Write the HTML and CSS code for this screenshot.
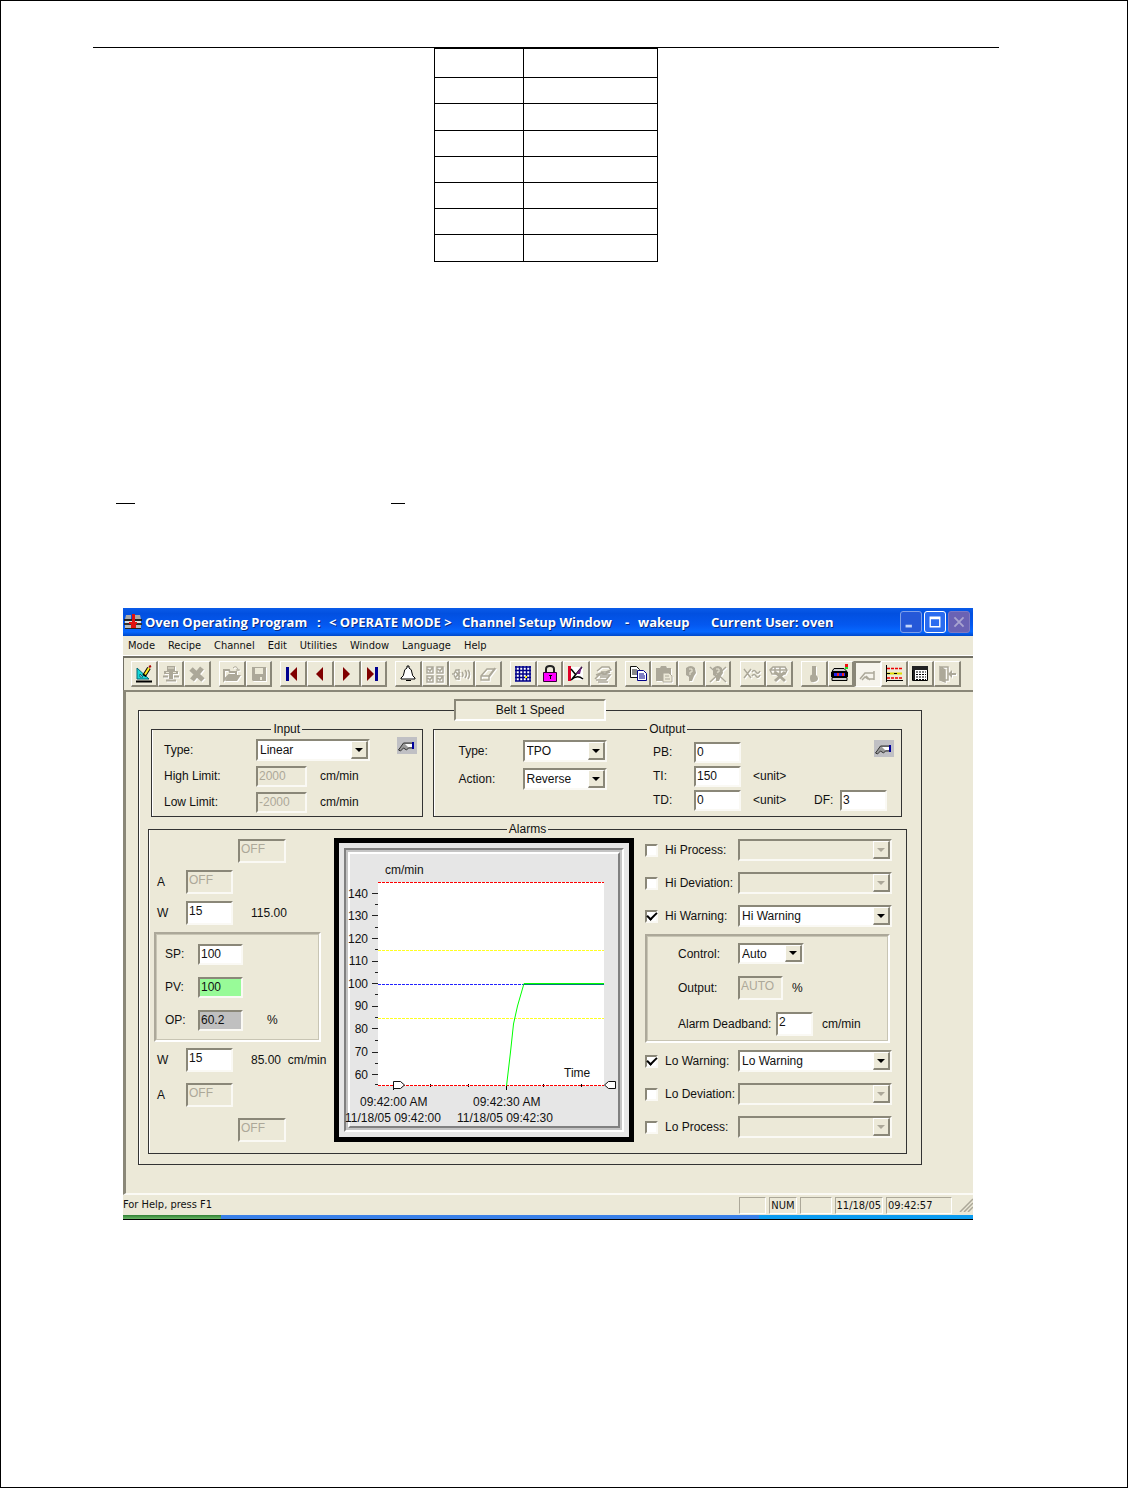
FILE: index.html
```html
<!DOCTYPE html>
<html lang="en">
<head>
<meta charset="utf-8">
<title>Oven Operating Program</title>
<link rel="stylesheet" href="styles.css">
</head>
<body>
<div class="sheet">
  <div class="page-rule"></div>
  <table class="blank-table">
    <tbody>
      <tr><td></td><td></td></tr><tr><td></td><td></td></tr>
      <tr><td></td><td></td></tr><tr><td></td><td></td></tr>
      <tr><td></td><td></td></tr><tr><td></td><td></td></tr>
      <tr><td></td><td></td></tr><tr><td></td><td></td></tr>
    </tbody>
  </table>
  <div class="marks"><span class="mark mark-wide"></span><span class="mark"></span></div>

  <main class="window">
    <header class="titlebar">
      <svg class="app-icon" viewBox="0 0 18 18" aria-hidden="true"><path d="M2 2h5v4H1zM11 2h5l1 4h-6z" fill="#aaa"/><path d="M0 6h18v2H0z" fill="#222"/><path d="M1 8h16v2H1z" fill="#ddd"/><path d="M0 10h18v2H0z" fill="#333"/><path d="M1 12h16v3H1z" fill="#bbb"/><path d="M1 15h16v1H1z" fill="#222"/><path d="M8 1h3v8h2v2h-1v4H7v-4H5V9h3z" fill="#e01010"/></svg>
      <h1 class="title"><span>Oven Operating Program</span><span>:</span><span>&lt; OPERATE MODE &gt;</span><span>Channel Setup Window</span><span>-</span><span>wakeup</span><span>Current User: oven</span></h1>
      <div class="caption-buttons">
        <button class="cap" aria-label="Minimize"><svg viewBox="0 0 22 22"><path d="M5 14h7v3H5z" fill="#c5d5fb"/></svg></button>
        <button class="cap cap-max" aria-label="Maximize"><svg viewBox="0 0 22 22"><path d="M5 5h12v12H5zM6.500 8h9v7.500h-9z" fill="#fff" fill-rule="evenodd"/></svg></button>
        <button class="cap cap-close" aria-label="Close" disabled><svg viewBox="0 0 22 22"><path d="M6 6l10 10M16 6L6 16" stroke="#a9a4d0" stroke-width="2"/></svg></button>
      </div>
    </header>

    <nav class="menubar">
      <button>Mode</button><button>Recipe</button><button>Channel</button><button>Edit</button><button>Utilities</button><button>Window</button><button>Language</button><button>Help</button>
    </nav>

    <div class="toolbar" role="toolbar">
      <div class="tools tools-3">
        <button aria-label="Design"><svg viewBox="0 0 20 20"><path d="M3 4v11h12z" fill="#18d8d8" stroke="#067" /><path d="M6 10v3h3z" fill="#fff" stroke="#067"/><path d="M2 17.500h16" stroke="#000" stroke-width="2"/><path d="M10 12l5-8" stroke="#000" stroke-width="4"/><path d="M11 10.500l4-6.500" stroke="#fe2" stroke-width="2"/><path d="M15 3l2-1" stroke="#a00" stroke-width="2"/></svg></button>
        <button disabled aria-label="Station"><svg viewBox="0 0 20 20"><path d="M6 2h8v5H6zM3 7h14v3H3zM8 10h4v5H8z" fill="#aca899"/><path d="M7 4h6M5 8.500h3M12 8.500h3" stroke="#ece9d8"/><path d="M2 12.500h5M13 12.500h5M5 16.500h10" stroke="#aca899" stroke-width="2"/></svg></button>
        <button disabled aria-label="Stop"><svg viewBox="0 0 20 20"><path d="M4 5l12 11M15 4L5 16" stroke="#aca899" stroke-width="5"/></svg></button>
      </div>
      <div class="tools tools-2">
        <button disabled aria-label="Open"><svg viewBox="0 0 20 20"><path d="M2 16V6h5l1 2h6v3H7z" fill="none" stroke="#aca899" stroke-width="2"/><path d="M7 11h12l-4 6H3z" fill="#aca899"/><path d="M11 4q3-3 5 1v2M14 6h4" stroke="#aca899" fill="none"/></svg></button>
        <button disabled aria-label="Save"><svg viewBox="0 0 20 20"><path d="M3 3h14v14H4l-1-1z" fill="#aca899"/><path d="M6 4h8v6H6zM11 13h2v3h-2z" fill="#ece9d8"/></svg></button>
      </div>
      <div class="tools tools-4">
        <button aria-label="First"><svg viewBox="0 0 20 20"><path d="M3 3h3v14H3z" fill="#000090"/><path d="M14 3v14L7 10z" fill="#800000"/></svg></button>
        <button aria-label="Previous"><svg viewBox="0 0 20 20"><path d="M13 3v14L6 10z" fill="#800000"/></svg></button>
        <button aria-label="Next"><svg viewBox="0 0 20 20"><path d="M6 3v14l7-7z" fill="#800000"/></svg></button>
        <button aria-label="Last"><svg viewBox="0 0 20 20"><path d="M4 3v14l7-7z" fill="#800000"/><path d="M12 3h3v14h-3z" fill="#000090"/></svg></button>
      </div>
      <div class="tools tools-4">
        <button aria-label="Alarm"><svg viewBox="0 0 20 20"><path d="M9 2h2v2q3 1 3 5 0 3 3 5v1H3v-1q3-2 3-5 0-4 3-5z" fill="#fff" stroke="#000"/><path d="M8 16h5v1H8z"/></svg></button>
        <button disabled aria-label="Checks"><svg viewBox="0 0 20 20"><g fill="none" stroke="#aca899" stroke-width="1.500"><path d="M2 3h6v6H2zM12 3h6v6h-6zM2 12h6v6H2zM12 12h6v6h-6zM3 5l2 2 3-4M13 5l2 2 3-4M3 14l2 2 3-4M13 14l2 2 3-4"/></g></svg></button>
        <button disabled aria-label="Sound"><svg viewBox="0 0 20 20"><g fill="none" stroke="#aca899" stroke-width="1.500"><path d="M1 10h2l2-4h3v9H5l-2-4M5 8l4 5M5 13l4-5M8 5v11M11 8q2 3 0 5M14 6q3 4 0 8M17 6q3 4 0 9"/></g></svg></button>
        <button disabled aria-label="Erase"><svg viewBox="0 0 20 20"><path d="M3 12l6-7h8l-6 8v3H3zM3 12h8l6-8" fill="none" stroke="#aca899" stroke-width="1.500"/></svg></button>
      </div>
      <div class="tools tools-4">
        <button aria-label="Grid"><svg viewBox="0 0 20 20"><path d="M2 2h16v15H2z" fill="#fff"/><path d="M3 2v15M6.500 2v15M10 2v15M13.500 2v15M17 2v15M2 3h16M2 6.500h16M2 10h16M2 13.500h16M2 17h16" stroke="#000088" stroke-width="1.500"/><path d="M12 12h2v2h-2z" fill="#fe0"/></svg></button>
        <button aria-label="Lock"><svg viewBox="0 0 20 20"><path d="M6 9V5q0-3 4-3t4 3v4" fill="none" stroke="#222" stroke-width="2"/><path d="M3.500 8.500h13v9h-13z" fill="#f0f" stroke="#303"/><path d="M9 11h3v1h-1v3h-1v-3H9z"/></svg></button>
        <button aria-label="Trend"><svg viewBox="0 0 20 20"><path d="M5 3h12v13H5z" fill="#fff"/><path d="M2 2h3v15H2z" fill="#e00028"/><path d="M5 5l5 6M6 15l10-12M5 16q6-6 12-1" stroke="#000" fill="none" stroke-width="1.500"/><path d="M10 10l6-8-2 8z" fill="#702080"/></svg></button>
        <button disabled aria-label="Assign"><svg viewBox="0 0 20 20"><g fill="none" stroke="#aca899" stroke-width="1.500"><path d="M4 7l5-4h7l2 3-5 2H8M3 11l5-2 4 1 5-2M2 15l4-4h11l-4 5H3M7 13h8M5 18h10"/></g></svg></button>
      </div>
      <div class="tools tools-4">
        <button aria-label="Copy"><svg viewBox="0 0 20 20"><path d="M2.500 2.500h6l3 3v8h-9z" fill="#fff" stroke="#111"/><path d="M4 6h5M4 8h5M4 10h5" stroke="#111"/><path d="M9.500 6.500h6l3 3v7h-9z" fill="#fff" stroke="#000088"/><path d="M11 10h5M11 12h6M11 14h6" stroke="#000088"/></svg></button>
        <button disabled aria-label="Paste"><svg viewBox="0 0 20 20"><path d="M2 4h4l1-2h5l1 2h4v13H2z" fill="#aca899"/><path d="M9 9h6l3 3v6H9z" fill="#ece9d8" stroke="#aca899"/><path d="M11 12h4M11 15h5" stroke="#aca899"/></svg></button>
        <button disabled aria-label="User"><svg viewBox="0 0 20 20"><path d="M5 4q5-4 9 0l1 5-2 3-2 5H8v-4l-3-2z" fill="#aca899"/><path d="M8 5h3v3H9v3" stroke="#ece9d8" fill="none"/></svg></button>
        <button disabled aria-label="Remove user"><svg viewBox="0 0 20 20"><path d="M5 4q5-4 9 0l1 5-2 3-2 5H8v-4l-3-2z" fill="#aca899"/><path d="M8 5h3v3H9v3" stroke="#ece9d8" fill="none"/><path d="M2 3l16 15M18 3L2 18" stroke="#aca899" stroke-width="1.500"/></svg></button>
      </div>
      <div class="tools tools-2">
        <button disabled aria-label="Compare"><svg viewBox="0 0 20 20"><path d="M2 5l7 9M9 5l-7 9M10 8q2-3 4 0t4-1M10 12q2-3 4 0t4-1" stroke="#aca899" stroke-width="1.500" fill="none"/></svg></button>
        <button disabled aria-label="Clear"><svg viewBox="0 0 20 20"><path d="M4 3h12l2 3-2 4H3L1 6zM1 6h17M6 3v7M11 3v7" fill="none" stroke="#aca899" stroke-width="1.500"/><path d="M6 8l10 9M16 8L6 17" stroke="#aca899" stroke-width="3"/></svg></button>
      </div>
      <div class="tools tools-6">
        <button disabled aria-label="Temperature"><svg viewBox="0 0 20 20"><path d="M8 2h4v9q2 1 2 3.500T10 18t-4-3.500T8 11z" fill="#aca899"/></svg></button>
        <button aria-label="Oven"><svg viewBox="0 0 20 20"><path d="M4 4.500h10l3 3H2zM2 13.500h15v3H2z" fill="#ccc" stroke="#000"/><path d="M1 8h17v5H1z"/><path d="M4 9h11v3H4z" fill="#22e"/><path d="M7 9h2v3H7zM12 9h2v3h-2z" fill="#e22"/><path d="M15 0h3v3h-3z" fill="#e11"/><path d="M15 3h3v2h-3z" fill="#2d2"/></svg></button>
        <button class="pressed" aria-label="Channel setup" aria-pressed="true"><svg viewBox="0 0 20 20"><path d="M2 14l5-6h9v6h-6l-3-2-3 3M8 11l4 4M16 6v9" fill="none" stroke="#aca899" stroke-width="1.500"/></svg></button>
        <button aria-label="Limits"><svg viewBox="0 0 20 20"><path d="M2.500 1v17M2 16.500h17" stroke="#000"/><path d="M3 4.500h15M3 14h15" stroke="#e00" stroke-width="1.500" stroke-dasharray="3 1"/><path d="M3 9.500h15" stroke="#dd0" stroke-width="2"/><path d="M3 9.500h3M10 9.500h3" stroke="#000"/></svg></button>
        <button aria-label="Table"><svg viewBox="0 0 20 20"><path d="M2.500 2.500h15v14h-15z" fill="#fff" stroke="#000"/><path d="M2 2h16v4H2zM3 6h2v10H3z" fill="#222"/><path d="M6 8h10M6 10.500h10M6 13h10M6 15.500h10" stroke="#000" stroke-dasharray="2 1"/></svg></button>
        <button disabled aria-label="Exit"><svg viewBox="0 0 20 20"><path d="M3 3h8v13H3M3 3l5 3v12l-5-2z" fill="none" stroke="#aca899" stroke-width="1.500"/><path d="M3 4l5 2v12l-5-2zM11 10l4-4v3h4v2h-4v3z" fill="#aca899"/></svg></button>
      </div>
    </div>

    <section class="client">
      <fieldset class="group group-main">
        <legend class="channel-name">Belt 1 Speed</legend>
        <div class="io-row">
          <fieldset class="group group-input">
            <legend>Input</legend>
            <div class="input-grid">
              <label for="in-type">Type:</label>
              <span class="combo combo-span"><select id="in-type"><option>Linear</option></select><i class="arrow"></i></span>
              <button class="hand" aria-label="Edit input"><svg viewBox="0 0 20 17"><path d="M1.500 13l5-7h9v5h-4l-2 2-3-2-3 3z" fill="#999" stroke="#333"/><path d="M8 7h7v3h-4z" fill="#fff"/><path d="M15 5h2v7h-2z" fill="#00009c"/></svg></button>
              <label for="hi-limit">High Limit:</label><input id="hi-limit" class="field" value="2000" disabled><span class="unit">cm/min</span>
              <label for="lo-limit">Low Limit:</label><input id="lo-limit" class="field" value="-2000" disabled><span class="unit">cm/min</span>
            </div>
          </fieldset>
          <fieldset class="group group-output">
            <legend>Output</legend>
            <div class="output-cols">
              <div class="output-left">
                <label for="out-type">Type:</label>
                <span class="combo"><select id="out-type"><option>TPO</option></select><i class="arrow"></i></span>
                <label for="out-action">Action:</label>
                <span class="combo"><select id="out-action"><option>Reverse</option></select><i class="arrow"></i></span>
              </div>
              <div class="output-right">
                <label for="pb">PB:</label><input id="pb" class="field" value="0">
                <button class="hand hand-end" aria-label="Edit output"><svg viewBox="0 0 20 17"><path d="M1.500 13l5-7h9v5h-4l-2 2-3-2-3 3z" fill="#999" stroke="#333"/><path d="M8 7h7v3h-4z" fill="#fff"/><path d="M15 5h2v7h-2z" fill="#00009c"/></svg></button>
                <label for="ti" class="row-start">TI:</label><input id="ti" class="field" value="150"><span>&lt;unit&gt;</span>
                <label for="td" class="row-start">TD:</label><input id="td" class="field" value="0"><span>&lt;unit&gt;</span>
                <label for="df">DF:</label><input id="df" class="field" value="3">
              </div>
            </div>
          </fieldset>
        </div>

        <fieldset class="group group-alarms">
          <legend>Alarms</legend>
          <div class="alarm-cols">
            <div class="levels">
              <div class="level-stack">
                <div class="level level-far"><input class="field tall" value="OFF" disabled aria-label="High process limit"></div>
                <div class="level"><label for="a-hi">A</label><input id="a-hi" class="field tall" value="OFF" disabled></div>
                <div class="level"><label for="w-hi">W</label><input id="w-hi" class="field tall" value="15"><span>115.00</span></div>
              </div>
              <div class="etched readings">
                <label for="sp">SP:</label><input id="sp" class="field" value="100"><span></span>
                <label for="pv">PV:</label><input id="pv" class="field field-green" value="100"><span></span>
                <label for="op">OP:</label><input id="op" class="field field-gray" value="60.2"><span>%</span>
              </div>
              <div class="level-stack level-stack-low">
                <div class="level"><label for="w-lo">W</label><input id="w-lo" class="field tall" value="15"><span>85.00&nbsp; cm/min</span></div>
                <div class="level"><label for="a-lo">A</label><input id="a-lo" class="field tall" value="OFF" disabled></div>
                <div class="level level-far"><input class="field tall" value="OFF" disabled aria-label="Low process limit"></div>
              </div>
            </div>

            <div class="chart"><div class="bevel-out"><div class="bevel-mid"><div class="bevel-in">
              <svg class="plot" viewBox="0 0 268 272" role="img" aria-label="Speed trend">
                <rect x="28" y="28" width="226" height="204" fill="#fff"/>
                <g stroke="#222" stroke-width="1" fill="none">
                  <path d="M22 39.500h6M22 61.500h6M22 84.500h6M22 107.500h6M22 129.500h6M22 152.500h6M22 174.500h6M22 198.500h6M22 220.500h6"/>
                  <path d="M25 50.500h3M25 73.500h3M25 95.500h3M25 118.500h3M25 140.500h3M25 163.500h3M25 186.500h3M25 209.500h3M25 230.500h3"/>
                </g>
                <path d="M80.500 230v3M118.500 230v3M156.500 231v5M193.500 230v3M231.500 230v3M43.500 231v5" stroke="#000" fill="none"/>
                <g fill="none" stroke-dasharray="3 1">
                  <path d="M28 28.500h226" stroke="#f00"/>
                  <path d="M28 231.500h226" stroke="#f00"/>
                  <path d="M28 96.500h226M28 164.500h226" stroke="#ff2"/>
                  <path d="M28 130.500h226" stroke="#22f"/>
                </g>
                <path d="M156.500 232l4-34 3-28 4-18 6.500-22.500h80" fill="none" stroke="#0f0"/>
                <path d="M174 130.500h80" stroke="#067a7a" fill="none"/>
                <path d="M43.500 227.500h7l4 3.500-4 3.500h-7zM265.500 227.500h-7l-4 3.500 4 3.500h7z" fill="#fff" stroke="#111"/>
                <g text-anchor="end"><text x="18" y="44">140</text><text x="18" y="66">130</text><text x="18" y="89">120</text><text x="18" y="111">110</text><text x="18" y="134">100</text><text x="18" y="156">90</text><text x="18" y="179">80</text><text x="18" y="202">70</text><text x="18" y="225">60</text></g>
                <text x="35" y="20">cm/min</text><text x="214" y="223">Time</text>
                <text x="10" y="252">09:42:00 AM</text><text x="123" y="252">09:42:30 AM</text>
                <text x="-5" y="268">11/18/05 09:42:00</text><text x="107" y="268">11/18/05 09:42:30</text>
              </svg>
            </div></div></div></div>

            <div class="actions">
              <div class="action-stack">
                <div class="action"><input type="checkbox" id="hp"><label for="hp">Hi Process:</label><span class="combo off"><select disabled aria-label="Hi Process action"><option></option></select><i class="arrow"></i></span></div>
                <div class="action"><input type="checkbox" id="hd"><label for="hd">Hi Deviation:</label><span class="combo off"><select disabled aria-label="Hi Deviation action"><option></option></select><i class="arrow"></i></span></div>
                <div class="action"><input type="checkbox" id="hw" checked><label for="hw">Hi Warning:</label><span class="combo"><select aria-label="Hi Warning action"><option>Hi Warning</option></select><i class="arrow"></i></span></div>
              </div>
              <div class="etched control">
                <div class="control-row"><label for="ctl">Control:</label><span class="combo"><select id="ctl"><option>Auto</option></select><i class="arrow"></i></span></div>
                <div class="control-row"><label for="out">Output:</label><input id="out" class="field tall" value="AUTO" disabled><span>%</span></div>
                <div class="control-row control-row-wide"><label for="dead">Alarm Deadband:</label><input id="dead" class="field tall" value="2"><span>cm/min</span></div>
              </div>
              <div class="action-stack">
                <div class="action"><input type="checkbox" id="lw" checked><label for="lw">Lo Warning:</label><span class="combo"><select aria-label="Lo Warning action"><option>Lo Warning</option></select><i class="arrow"></i></span></div>
                <div class="action"><input type="checkbox" id="ld"><label for="ld">Lo Deviation:</label><span class="combo off"><select disabled aria-label="Lo Deviation action"><option></option></select><i class="arrow"></i></span></div>
                <div class="action"><input type="checkbox" id="lp"><label for="lp">Lo Process:</label><span class="combo off"><select disabled aria-label="Lo Process action"><option></option></select><i class="arrow"></i></span></div>
              </div>
            </div>
          </div>
        </fieldset>
      </fieldset>
    </section>

    <footer class="statusbar">
      <span class="status-text">For Help, press F1</span>
      <span class="cell"></span><span class="cell">NUM</span><span class="cell cell-key"></span><span class="cell">11/18/05</span><span class="cell cell-clock">09:42:57</span>
      <svg class="grip" viewBox="0 0 14 14" aria-hidden="true"><path d="M1 14L14 1M5 14l9-9M9 14l5-5" stroke="#aca899" stroke-width="1.500"/></svg>
    </footer>
    <div class="taskbar"><span class="start"></span><span class="tasks"></span><span class="tray"></span></div>
  </main>
</div>
</body>
</html>
```
FILE: styles.css
```css
* { box-sizing: border-box; }

body {
  margin: 0;
  background: #fff;
  color: #111;
  font: 12px/14px "Liberation Sans", Arial, sans-serif;
}

button, input, select {
  font: inherit;
  color: inherit;
  margin: 0;
  padding: 0;
  border: 0;
  border-radius: 0;
  background: none;
}

/* Document page */
.sheet {
  min-height: 100vh;
  border: 1px solid #000;
  padding: 46px 128px 0 92px;
}

.page-rule { border-top: 1px solid #000; }

.blank-table {
  margin: 0 auto;
  border-spacing: 0;
  border: solid #000;
  border-width: 1px 0 0 1px;
}
.blank-table td {
  width: 134px;
  height: 26px;
  padding: 0;
  border: solid #000;
  border-width: 0 1px 1px 0;
}
.blank-table td:first-child { width: 89px; }
.blank-table tr:first-child td { height: 29px; }
.blank-table tr:nth-child(3) td,
.blank-table tr:last-child td { height: 27px; }

.marks {
  display: flex;
  gap: 256px;
  padding-left: 23px;
  margin-top: 241px;
}
.mark { width: 14px; border-top: 1px solid #000; }
.mark-wide { width: 19px; }

/* Application window */
.window {
  margin: 104px 26px 0 30px;
  background: #ece9d8;
}

.titlebar {
  display: flex;
  align-items: center;
  height: 28px;
  padding: 0 3px 0 1px;
  background: linear-gradient(#0a5be8, #0250e0 20%, #0458f0 60%, #0668ff 85%, #0148c8);
  color: #fff;
}
.app-icon { width: 18px; height: 18px; margin-right: 3px; }
.title {
  flex: 1;
  display: grid;
  grid-template-columns: 172px 12px 133px 163px 13px 73px 1fr;
  margin: 0;
  font: bold 13px/16px "Open Sans", "Noto Sans", sans-serif;
  white-space: nowrap;
  text-shadow: 1px 1px 0 #0a2a80;
}
.caption-buttons { display: flex; gap: 2px; }
.cap {
  width: 22px;
  height: 22px;
  border: 1px solid #7f9fe8;
  border-radius: 3px;
  background: #2558d8;
}
.cap svg { display: block; width: 20px; height: 20px; }
.cap-max { border-color: #fff; background: #2a6cf0; }
.cap-close { border-color: #8078c0; background: #6a62b4; }

.menubar {
  display: flex;
  gap: 13px;
  height: 20px;
  padding: 0 5px;
  font: 11px/18px "DejaVu Sans Condensed", "DejaVu Sans", sans-serif;
}

.toolbar {
  display: flex;
  gap: 8px;
  padding: 3px 12px 3px 7px;
  border-top: 2px solid #716f64;
  border-left: 1px solid #716f64;
  box-shadow: 0 -1px 0 #fff;
}
.tools { display: flex; }
.tools-2 { flex: 2; }
.tools-3 { flex: 3; }
.tools-4 { flex: 4; }
.tools-6 { flex: 6; }
.tools button {
  flex: 1;
  display: flex;
  align-items: center;
  justify-content: center;
  height: 26px;
  border: solid;
  border-width: 1px 2px 2px 1px;
  border-color: #fff #8a8778 #8a8778 #fff;
}
.tools .pressed {
  border-width: 2px 1px 1px 2px;
  border-color: #8a8778 #fff #fff #8a8778;
  background: #f6f4ec;
}
.tools svg { width: 20px; height: 20px; }
.tools button:disabled svg { filter: drop-shadow(1px 1px 0 #fff); }

.client {
  padding: 7px 51px 28px 12px;
  border-top: 2px solid #8a8778;
  border-left: 3px solid #8a8778;
  border-bottom: 2px solid #fbfaf5;
}

.group {
  min-width: 0;
  margin: 0;
  padding: 0;
  border: 1px solid #333;
  box-shadow: inset 1px 0 0 #fff;
}
.group legend {
  height: 14px;
  margin: 0 auto;
  padding: 0 2px;
}
.group-main { padding: 1px 0 10px; }
.group .channel-name {
  width: 152px;
  height: 22px;
  padding: 2px;
  border: 2px solid;
  border-color: #8a8778 #fff #fff #8a8778;
  text-align: center;
}

.io-row {
  display: flex;
  gap: 10px;
  padding: 0 19px 0 12px;
}
.group-input { flex: 271; }
.group-output { flex: 470; }

.field {
  width: 100%;
  height: 21px;
  padding: 0 1px;
  border: 2px solid;
  border-color: #8a8778 #faf9f4 #faf9f4 #8a8778;
  background: #fff;
}
.field:disabled { background: #ece9d8; color: #aca899; }
.tall { height: 24px; padding-bottom: 4px; }
.field-green { background: #98fb98; }
.field-gray { background: #c0c0c0; }

.combo {
  display: grid;
  grid-template-columns: 1fr 17px;
  width: 100%;
  height: 22px;
  border: 2px solid;
  border-color: #8a8778 #faf9f4 #faf9f4 #8a8778;
  background: #fff;
}
.combo select {
  grid-area: 1 / 1 / 2 / 3;
  width: 100%;
  appearance: none;
  padding-left: 2px;
}
.arrow {
  grid-area: 1 / 2;
  display: grid;
  place-items: center;
  border: solid;
  border-width: 1px 2px 2px 1px;
  border-color: #fff #8a8778 #8a8778 #fff;
  background: #ece9d8;
  pointer-events: none;
}
.arrow::before {
  content: "";
  border: 4px solid transparent;
  border-top-color: #000;
  border-bottom: 0;
}
.off { background: #ece9d8; }
.off .arrow::before { border-top-color: #aca899; }

.hand {
  width: 20px;
  height: 17px;
  background: #c0c0c4;
}
.hand svg { display: block; width: 20px; height: 17px; }

.input-grid {
  display: grid;
  grid-template-columns: 92px 51px 13px 50px 1fr;
  grid-auto-rows: 26px;
  align-items: center;
  padding: 1px 0 1px 12px;
}
.combo-span { grid-column: 2 / 5; width: 114px; }
.input-grid .hand { grid-column: 5; justify-self: end; align-self: start; margin-right: 5px; }
.unit { grid-column: 4 / 6; }
.input-grid label { grid-column: 1; }

.output-cols {
  display: flex;
  justify-content: space-between;
  padding: 1px 7px 0 25px;
}
.output-left {
  display: grid;
  grid-template-columns: 64px 84px;
  grid-auto-rows: 28px;
  align-items: center;
  align-content: start;
}
.output-right {
  display: grid;
  grid-template-columns: 41px 47px 12px 61px 26px 47px 7px;
  grid-auto-rows: 24px;
  align-items: center;
  align-content: start;
  padding-top: 3px;
}
.output-right span { grid-column: 4; }
.row-start { grid-column: 1; }
.hand-end { grid-column: 6 / 8; justify-self: end; align-self: start; }

.group-alarms { margin: 5px 14px 0 9px; padding-bottom: 11px; }
.alarm-cols {
  display: grid;
  grid-template-columns: 185px 300px 1fr;
  padding-top: 2px;
}

.levels { padding: 1px 13px 0 5px; }
.level-stack { display: grid; gap: 7px; padding-left: 3px; }
.level-stack-low { gap: 11px; }
.level {
  display: grid;
  grid-template-columns: 29px 47px 1fr;
  align-items: center;
  white-space: nowrap;
}
.level span { padding-left: 18px; }
.level-far { grid-template-columns: 48px; padding-left: 81px; }

.etched {
  border: 2px solid;
  border-color: #aca899 #fff #fff #aca899;
  outline: 1px solid #c8c5b4;
  outline-offset: -3px;
}
.readings {
  display: grid;
  grid-template-columns: 33px 45px 1fr;
  gap: 12px 0;
  align-items: center;
  height: 110px;
  align-content: center;
  margin: 7px 0 6px;
  padding-left: 9px;
}
.readings span { padding-left: 24px; }

/* Trend chart */
.chart {
  border: 5px solid #000;
  padding: 5px;
  background: #e6e6e6;
}
.bevel-out { border: 2px solid; border-color: #808080 #fff #fff #808080; }
.bevel-mid { border: 2px solid #c4c4c4; }
.bevel-in { border: 2px solid; border-color: #fff #808080 #808080 #fff; }
.plot { display: block; width: 268px; height: 272px; overflow: visible; fill: #111; }

.actions { padding: 1px 14px 0 11px; }
.action-stack { display: grid; gap: 12px; }
.action {
  display: grid;
  grid-template-columns: 20px 73px 1fr;
  align-items: center;
  height: 21px;
  white-space: nowrap;
}
.action input {
  appearance: none;
  display: grid;
  place-items: center;
  width: 13px;
  height: 13px;
  border: 2px solid;
  border-color: #8a8778 #faf9f4 #faf9f4 #8a8778;
  background: #fff;
}
.action input:checked::before {
  content: "";
  width: 8px;
  height: 4px;
  margin-bottom: 3px;
  border: solid #000;
  border-width: 0 0 2px 2px;
  transform: rotate(-45deg);
}
.control {
  display: grid;
  gap: 12px;
  height: 109px;
  margin: 8px 2px 7px 0;
  padding: 7px 0 0 31px;
  align-content: start;
}
.control-row {
  display: grid;
  grid-template-columns: 60px 45px 1fr;
  align-items: center;
}
.control-row .combo { width: 66px; height: 21px; }
.control-row span:last-child:not(.combo) { padding-left: 9px; }
.control-row-wide { grid-template-columns: 98px 37px 1fr; }

.statusbar {
  display: flex;
  align-items: center;
  gap: 3px;
  height: 20px;
  font: 11px/14px "DejaVu Sans Condensed", "DejaVu Sans", sans-serif;
}
.status-text { flex: 1; }
.cell {
  min-width: 27px;
  height: 17px;
  padding: 1px;
  border: 1px solid;
  border-color: #aca899 #fff #fff #aca899;
}
.cell-key { min-width: 32px; }
.cell-clock { min-width: 66px; }
.grip { width: 14px; height: 14px; margin-left: 4px; }

.taskbar {
  display: flex;
  height: 5px;
  border-bottom: 1px solid #000;
}
.start { flex: 98; background: linear-gradient(#2f7f33, #6cb868); }
.tasks { flex: 538; background: #3a80e8; }
.tray { flex: 214; background: #0c9cf0; }
```
